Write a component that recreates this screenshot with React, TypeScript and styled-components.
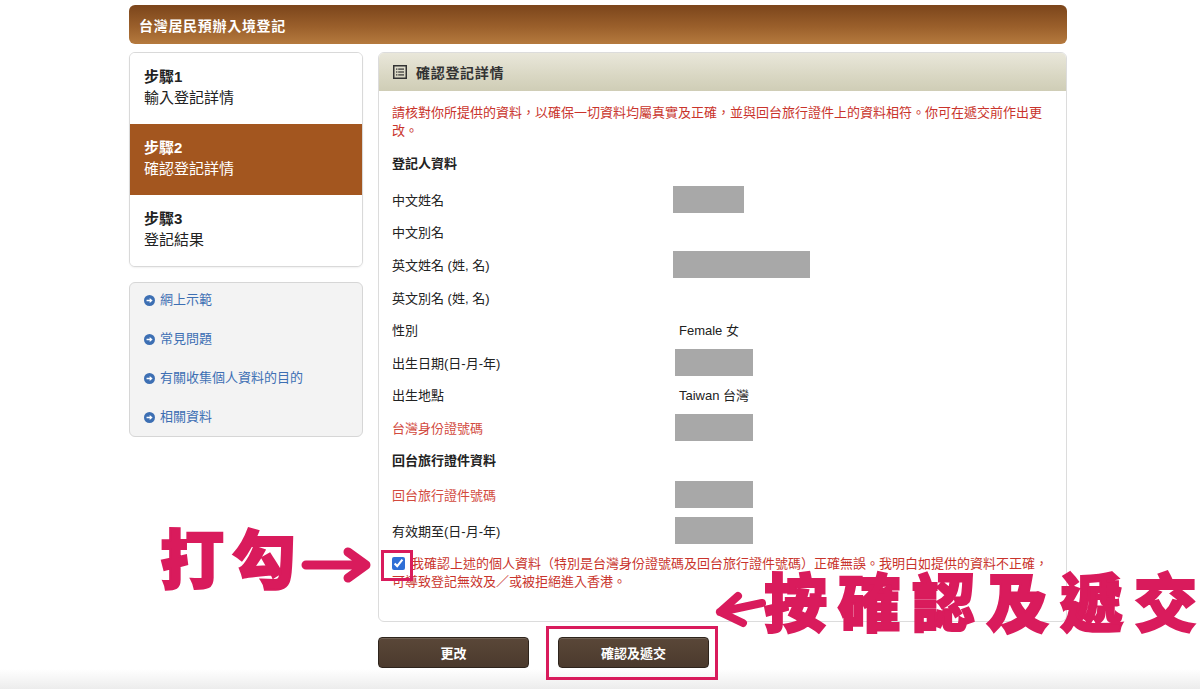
import React from "react";
import styled, { createGlobalStyle } from "styled-components";

const Global = createGlobalStyle`
  html, body { margin: 0; padding: 0; background: #fff; overflow: hidden; }
  body { font-family: "Liberation Sans", "Noto Sans CJK TC", sans-serif; color: #333; }
  * { box-sizing: border-box; }
`;

const Root = styled.div`
  position: relative;
  width: 1200px;
  height: 689px;
  overflow: hidden;
`;

const Page = styled.div`
  width: 938px;
  margin-left: 129px;
  padding-top: 5px;
`;

const TitleBar = styled.div`
  height: 39px;
  border-radius: 6px;
  background: linear-gradient(to bottom, #7b451b 0%, #9a5f2b 55%, #b57a3e 100%);
  display: flex;
  align-items: center;
  padding-left: 10px;
  color: #fff;
  font-weight: bold;
  font-size: 14px;
  letter-spacing: 0.7px;
`;

const Columns = styled.div`
  display: flex;
  gap: 15px;
  margin-top: 8px;
  align-items: flex-start;
`;

const Sidebar = styled.div`
  width: 234px;
  display: flex;
  flex-direction: column;
  gap: 15px;
`;

const StepBox = styled.div`
  border: 1px solid #d9d9d9;
  border-radius: 6px;
  overflow: hidden;
  background: #fff;
  box-shadow: 0 1px 2px rgba(0, 0, 0, 0.06);
`;

const Step = styled.div<{ $active?: boolean }>`
  height: 71px;
  padding: 13px 0 0 14px;
  background: ${(p) => (p.$active ? "#a3561f" : "#fff")};
  color: ${(p) => (p.$active ? "#fff" : "#222")};
  font-size: 15px;
  line-height: 21px;
`;

const StepNo = styled.div`
  font-weight: bold;
`;

const LinkBox = styled.div`
  border: 1px solid #d6d6d6;
  border-radius: 6px;
  background: #f3f3f3;
  height: 155px;
  display: flex;
  flex-direction: column;
`;

const LinkItem = styled.a`
  flex: 0 0 39px;
  display: flex;
  align-items: flex-start;
  gap: 5px;
  padding: 9px 0 0 14px;
  line-height: 16px;
  color: #3d6fb3;
  font-size: 13px;
  text-decoration: none;
  svg { margin-top: 2.5px; }
`;

const Panel = styled.div`
  width: 689px;
  display: flex;
  flex-direction: column;
`;

const Card = styled.div`
  border: 1px solid #dcdcdc;
  border-radius: 6px;
  overflow: hidden;
  height: 570px;
  background: #fff;
`;

const CardHead = styled.div`
  height: 38px;
  background: linear-gradient(to bottom, #e9e7da 0%, #d9d7c3 60%, #cfcdb6 100%);
  display: flex;
  align-items: center;
  gap: 9px;
  padding-left: 14px;
  font-weight: bold;
  font-size: 14px;
  letter-spacing: 0.7px;
  color: #333;
`;

const CardBody = styled.div`
  padding: 13px 13px 0 13px;
`;

const Notice = styled.p`
  margin: 0;
  color: #c9342c;
  font-size: 13px;
  line-height: 18px;
`;

const Section = styled.div`
  margin-top: 15px;
  font-weight: bold;
  font-size: 13px;
  line-height: 18px;
  color: #222;
  margin-bottom: 10px;
`;

const Row = styled.div<{ $h?: number }>`
  display: grid;
  grid-template-columns: 281px 1fr;
  align-items: center;
  height: ${(p) => p.$h ?? 32.6}px;
  font-size: 13px;
`;

const Label = styled.div<{ $red?: boolean; $bold?: boolean }>`
  color: ${(p) => (p.$red ? "#d24a3e" : "#222")};
  font-weight: ${(p) => (p.$bold ? "bold" : "normal")};
`;

const Value = styled.div`
  padding-left: 6px;
  color: #222;
`;

const Redacted = styled.div<{ $w: number; $x?: number }>`
  width: ${(p) => p.$w}px;
  height: 27px;
  margin-left: ${(p) => p.$x ?? 0}px;
  background: #a8a8a8;
`;

const Confirm = styled.label`
  display: block;
  margin-top: 8px;
  color: #c9342c;
  font-size: 13px;
  line-height: 18px;
`;

const Check = styled.input`
  width: 13px;
  height: 13px;
  margin: 0 6px 0 0;
  vertical-align: -2px;
  accent-color: #2f6fd6;
`;

const Buttons = styled.div`
  display: flex;
  gap: 29px;
  margin-top: 15px;
`;

const Btn = styled.button`
  width: 151px;
  height: 31px;
  border: 1px solid #2e241c;
  border-radius: 4px;
  background: linear-gradient(to bottom, #5a4738 0%, #4b3a2d 100%);
  color: #fff;
  font-family: "Liberation Sans", "Noto Sans CJK TC", sans-serif;
  font-weight: bold;
  font-size: 13px;
  box-shadow: inset 0 1px 0 rgba(255, 255, 255, 0.15);
`;

const Footer = styled.div`
  position: absolute;
  left: 0;
  right: 0;
  bottom: 0;
  height: 20px;
  background: linear-gradient(to bottom, #ffffff 0%, #ececec 100%);
`;

const Annot = styled.div<{ $x: number; $y: number; $size: number; $gap: number }>`
  position: absolute;
  left: ${(p) => p.$x}px;
  top: ${(p) => p.$y}px;
  display: flex;
  gap: ${(p) => p.$gap}px;
  font-family: "Noto Sans CJK TC", sans-serif;
  font-weight: 900;
  font-size: ${(p) => p.$size}px;
  line-height: 0.76;
  color: #d91b5c;
  -webkit-text-stroke: 2px #d91b5c;
  white-space: nowrap;
`;

const Frame = styled.div<{ $x: number; $y: number; $w: number; $h: number }>`
  position: absolute;
  left: ${(p) => p.$x}px;
  top: ${(p) => p.$y}px;
  width: ${(p) => p.$w}px;
  height: ${(p) => p.$h}px;
  border: 3px solid #d91b5c;
`;

const ArrowSvg = styled.svg<{ $x: number; $y: number }>`
  position: absolute;
  left: ${(p) => p.$x}px;
  top: ${(p) => p.$y}px;
  overflow: visible;
`;

const ListIcon = () => (
  <svg width="14" height="14" viewBox="0 0 14 14">
    <rect x="0.75" y="0.75" width="12.5" height="12.5" fill="none" stroke="#333" strokeWidth="1.5" />
    <rect x="3" y="3.5" width="1.4" height="1.2" fill="#333" />
    <rect x="5.2" y="3.5" width="5.8" height="1.2" fill="#333" />
    <rect x="3" y="6.4" width="1.4" height="1.2" fill="#333" />
    <rect x="5.2" y="6.4" width="5.8" height="1.2" fill="#333" />
    <rect x="3" y="9.3" width="1.4" height="1.2" fill="#333" />
    <rect x="5.2" y="9.3" width="5.8" height="1.2" fill="#333" />
  </svg>
);

const CircleArrow = () => (
  <svg width="11" height="11" viewBox="0 0 12 12">
    <circle cx="6" cy="6" r="6" fill="#3d6fb3" />
    <path d="M2.8 5.1h3.4V3.2L9.4 6 6.2 8.8V6.9H2.8z" fill="#fff" />
  </svg>
);

const links = ["網上示範", "常見問題", "有關收集個人資料的目的", "相關資料"];

const chars = (s: string) => Array.from(s).map((c, i) => <span key={i}>{c}</span>);

export default function App() {
  return (
    <Root>
      <Global />
      <Page>
        <TitleBar>台灣居民預辦入境登記</TitleBar>
        <Columns>
          <Sidebar>
            <StepBox>
              <Step>
                <StepNo>步驟1</StepNo>
                <div>輸入登記詳情</div>
              </Step>
              <Step $active>
                <StepNo>步驟2</StepNo>
                <div>確認登記詳情</div>
              </Step>
              <Step>
                <StepNo>步驟3</StepNo>
                <div>登記結果</div>
              </Step>
            </StepBox>
            <LinkBox>
              {links.map((l) => (
                <LinkItem key={l} href="#">
                  <CircleArrow />
                  {l}
                </LinkItem>
              ))}
            </LinkBox>
          </Sidebar>
          <Panel>
            <Card>
              <CardHead>
                <ListIcon />
                確認登記詳情
              </CardHead>
              <CardBody>
                <Notice>
                  請核對你所提供的資料，以確保一切資料均屬真實及正確，並與回台旅行證件上的資料相符。你可在遞交前作出更改。
                </Notice>
                <Section>登記人資料</Section>
                <Row>
                  <Label>中文姓名</Label>
                  <Redacted $w={71} />
                </Row>
                <Row>
                  <Label>中文別名</Label>
                  <div />
                </Row>
                <Row>
                  <Label>英文姓名 (姓, 名)</Label>
                  <Redacted $w={137} />
                </Row>
                <Row>
                  <Label>英文別名 (姓, 名)</Label>
                  <div />
                </Row>
                <Row>
                  <Label>性別</Label>
                  <Value>Female 女</Value>
                </Row>
                <Row>
                  <Label>出生日期(日-月-年)</Label>
                  <Redacted $w={78} $x={2} />
                </Row>
                <Row>
                  <Label>出生地點</Label>
                  <Value>Taiwan 台灣</Value>
                </Row>
                <Row>
                  <Label $red>台灣身份證號碼</Label>
                  <Redacted $w={78} $x={2} />
                </Row>
                <Row $h={31}>
                  <Label $bold>回台旅行證件資料</Label>
                  <div />
                </Row>
                <Row $h={40}>
                  <Label $red>回台旅行證件號碼</Label>
                  <Redacted $w={78} $x={2} />
                </Row>
                <Row $h={32}>
                  <Label>有效期至(日-月-年)</Label>
                  <Redacted $w={78} $x={2} />
                </Row>
                <Confirm>
                  <Check type="checkbox" defaultChecked />
                  我確認上述的個人資料（特別是台灣身份證號碼及回台旅行證件號碼）正確無誤。我明白如提供的資料不正確，可導致登記無效及／或被拒絕進入香港。
                </Confirm>
              </CardBody>
            </Card>
            <Buttons>
              <Btn>更改</Btn>
              <Btn>確認及遞交</Btn>
            </Buttons>
          </Panel>
        </Columns>
      </Page>
      <Footer />

      <Annot $x={160} $y={531} $size={64} $gap={8}>{chars("打勾")}</Annot>
      <ArrowSvg $x={300} $y={546} width="74" height="38" viewBox="0 0 74 38">
        <path d="M6 19 H62 M48 6 L66 19 L48 32" fill="none" stroke="#d91b5c" strokeWidth="9" strokeLinecap="round" strokeLinejoin="round" />
      </ArrowSvg>
      <Frame $x={381} $y={550} $w={32} $h={31} />

      <ArrowSvg $x={712} $y={588} width="56" height="42" viewBox="0 0 56 42">
        <path d="M26 8 L8 24 L31 35 M8 24 L50 15" fill="none" stroke="#d91b5c" strokeWidth="8" strokeLinecap="round" strokeLinejoin="round" />
      </ArrowSvg>
      <Annot $x={764} $y={575} $size={63} $gap={11}>{chars("按確認及遞交")}</Annot>
      <Frame $x={546} $y={626} $w={172} $h={54} />
    </Root>
  );
}
